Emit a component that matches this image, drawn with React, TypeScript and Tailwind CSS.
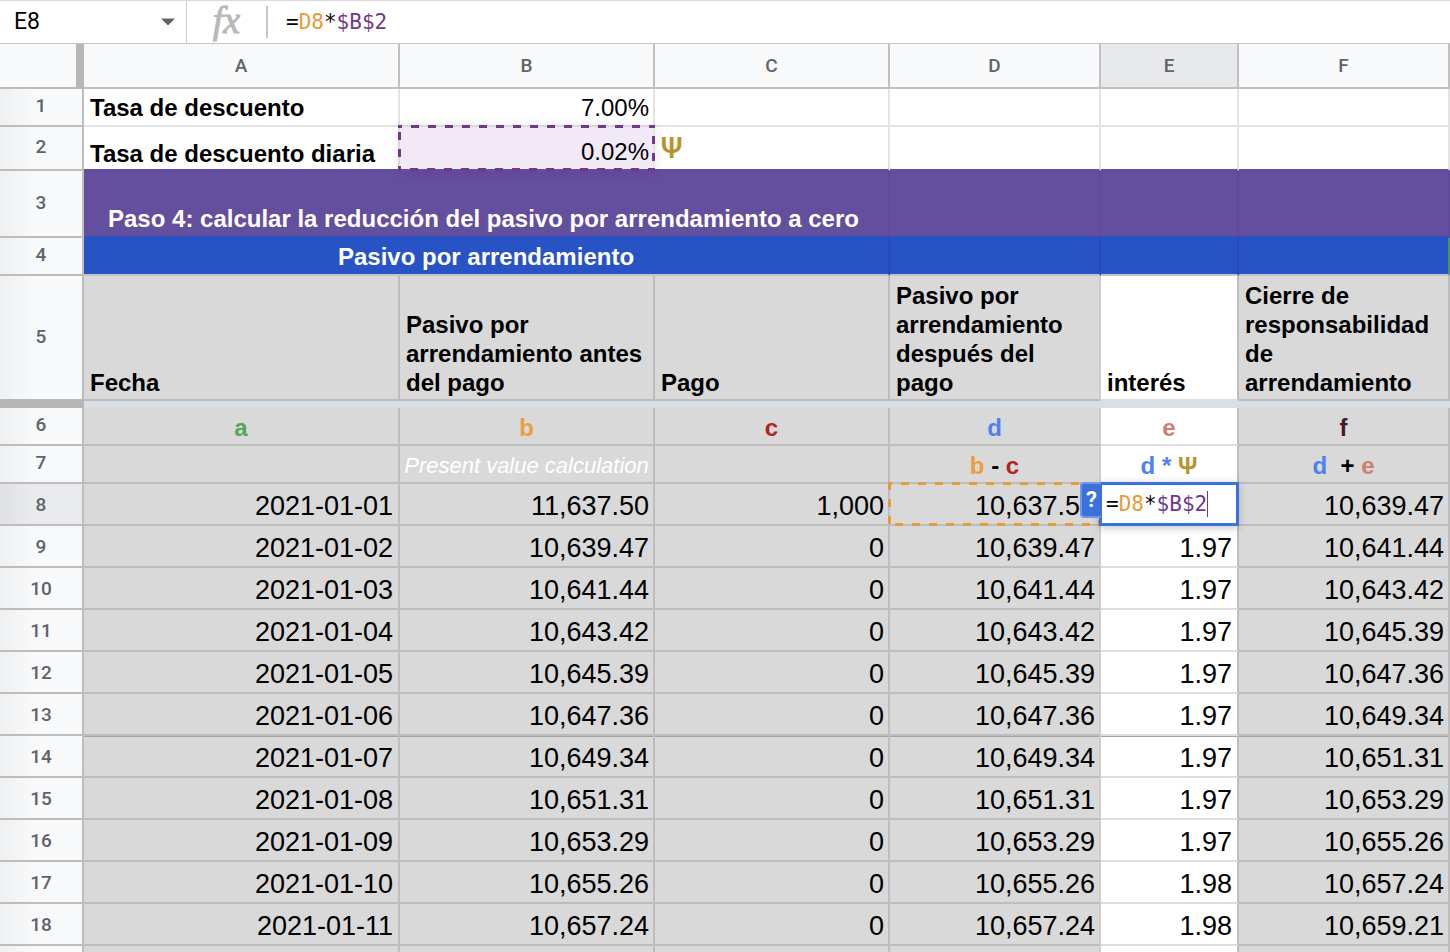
import React from "react";

const GRID = "border-[#bdbdbd]";
const LIGHT = "border-[#e2e3e3]";

const tones = {
  green: "text-[#56a558]",
  orange: "text-[#eb9f3c]",
  red: "text-[#b0241a]",
  blue: "text-[#4f81ee]",
  coral: "text-[#cc7f72]",
  plum: "text-[#46182f]",
  gold: "text-[#b8932e]",
};

function RowHead({ n, h, active = false, edge = GRID, pad = "pb-0.5" }: { n: string; h: string; active?: boolean; edge?: string; pad?: string }) {
  const fill = active
    ? "bg-linear-to-r from-[#dfe1e6] to-[#e8eaed] to-40%"
    : "bg-linear-to-r from-[#eff0f2] to-[#f8f9fb] to-40%";
  return (
    <th
      scope="row"
      className={`${h} ${fill} ${edge} ${pad} border-r-2 border-b-2 px-0 text-center align-middle font-[Roboto,sans-serif] text-[19px] leading-6 font-medium text-[#5f6368]`}
    >
      {n}
    </th>
  );
}

function Marquee({ color }: { color: string }) {
  return (
    <svg className="pointer-events-none absolute -top-0.5 -left-0.5 h-[calc(100%+4px)] w-[calc(100%+4px)] overflow-hidden" aria-hidden="true">
      <rect width="100%" height="100%" fill="none" stroke={color} strokeWidth="6" strokeDasharray="8 9" strokeDashoffset="4" />
    </svg>
  );
}

function Formula() {
  return (
    <>
      =<span className="text-[#e69a38]">D8</span>*<span className="text-[#6f3a8c]">$B$2</span>
    </>
  );
}

const BOLD = "px-1.5 align-bottom text-[24px] leading-[29px] font-bold";
const NUM = "pb-0.5 text-right align-bottom text-[27px] leading-8";
const PERCENT = "pr-1 pb-[3px] text-right align-bottom text-[24px] leading-[29px]";
const MID = "pb-0.5 text-center align-bottom text-[24px] leading-[29px] font-bold";
const GREY = "border-r-2 border-b-2 border-[#bdbdbd] bg-[#d9d9d9]";
const GREY_SOFT = "border-r-2 border-b-2 border-r-[#cdcdcd] border-b-[#bdbdbd] bg-[#d9d9d9]";
const WHITE = "border-r-2 border-b-2 border-r-[#bdbdbd] border-b-[#dcdcdc] bg-white";

const letters = [
  ["a", tones.green, GREY],
  ["b", tones.orange, GREY],
  ["c", tones.red, GREY],
  ["d", tones.blue, GREY_SOFT],
  ["e", tones.coral, WHITE],
  ["f", tones.plum, GREY],
];

const columnFill = [GREY, GREY, GREY, GREY_SOFT, WHITE, GREY];

const entries = [
  ["8", "2021-01-01", "11,637.50", "1,000", "10,637.50", "", "10,639.47"],
  ["9", "2021-01-02", "10,639.47", "0", "10,639.47", "1.97", "10,641.44"],
  ["10", "2021-01-03", "10,641.44", "0", "10,641.44", "1.97", "10,643.42"],
  ["11", "2021-01-04", "10,643.42", "0", "10,643.42", "1.97", "10,645.39"],
  ["12", "2021-01-05", "10,645.39", "0", "10,645.39", "1.97", "10,647.36"],
  ["13", "2021-01-06", "10,647.36", "0", "10,647.36", "1.97", "10,649.34"],
  ["14", "2021-01-07", "10,649.34", "0", "10,649.34", "1.97", "10,651.31"],
  ["15", "2021-01-08", "10,651.31", "0", "10,651.31", "1.97", "10,653.29"],
  ["16", "2021-01-09", "10,653.29", "0", "10,653.29", "1.97", "10,655.26"],
  ["17", "2021-01-10", "10,655.26", "0", "10,655.26", "1.98", "10,657.24"],
  ["18", "2021-01-11", "10,657.24", "0", "10,657.24", "1.98", "10,659.21"],
  ["", "", "", "", "", "", ""],
];

function Entry({ row }: { row: string[] }) {
  const [n, ...cells] = row;
  const first = n === "8";
  const top = n === "14" ? "shadow-[inset_0_1px_0_#a3a3a3]" : "";
  return (
    <tr>
      <RowHead n={n} h="h-[42px]" active={first} pad="pt-0.5" />
      {cells.map((value, i) => {
        if (first && i === 3)
          return (
            <td key={i} className={`relative ${GREY_SOFT} ${NUM} pr-1`}>
              {value}
              <Marquee color="#e69a38" />
            </td>
          );
        if (first && i === 4)
          return (
            <td key={i} className="relative bg-white p-0">
              <div className="absolute -top-0.5 right-0 bottom-0 -left-0.5 z-10 flex items-center border-[3px] border-[#3b71da] bg-white pl-1 shadow-[0_2px_8px_rgba(60,64,67,0.3)]">
                <div
                  role="textbox"
                  aria-label="Celda E8"
                  contentEditable
                  suppressContentEditableWarning
                  className="border-r border-[#6f3a8c] font-['DejaVu_Sans_Mono',monospace] text-[21px] leading-[26px] outline-none"
                >
                  <Formula />
                </div>
              </div>
              <button
                type="button"
                aria-label="Ayuda de fórmulas"
                className="absolute -top-0.5 right-full z-20 h-9 w-[21px] rounded-l-sm border-2 border-r-0 border-[#6f97e6] bg-[#3b71da] font-[Roboto,sans-serif] text-[22px] leading-6 font-bold text-white"
              >
                ?
              </button>
            </td>
          );
        return (
          <td key={i} className={`${columnFill[i]} ${NUM} ${i === 0 || i === 4 ? "pr-[5px]" : "pr-1"} ${top}`}>
            {value}
          </td>
        );
      })}
    </tr>
  );
}

export default function App() {
  return (
    <div className="flex h-screen flex-col overflow-hidden bg-white font-['Liberation_Sans',Arial,sans-serif] text-black">
      <header className="flex h-11 shrink-0 items-center border-t border-b border-t-[#dadada] border-b-[#c4c4c4]">
        <div className="flex h-full w-[187px] items-center justify-between border-r border-[#d0d0d0] pr-2.5 pl-3.5">
          <input aria-label="Cuadro de nombres" defaultValue="E8" className="w-24 bg-transparent font-[Roboto,sans-serif] text-[23px] leading-7 outline-none" />
          <button type="button" aria-label="Abrir lista de rangos" className="flex h-8 w-4 items-center justify-center">
            <svg width="14" height="8" viewBox="0 0 14 8" aria-hidden="true">
              <path d="M0 0.5h14L7 7.5z" fill="#5f6368" />
            </svg>
          </button>
        </div>
        <div className="flex h-8 w-[81px] items-center justify-center border-r-2 border-[#c6c6c6] pb-1 font-['Liberation_Serif',serif] text-[38px] leading-8 text-[#b9b9b9] italic [-webkit-text-stroke:1px_#b9b9b9]">
          fx
        </div>
        <div
          role="textbox"
          aria-label="Barra de fórmulas"
          contentEditable
          suppressContentEditableWarning
          className="flex-1 pl-[18px] font-['DejaVu_Sans_Mono',monospace] text-[21px] leading-7 outline-none"
        >
          <Formula />
        </div>
      </header>

      <main className="min-h-0 flex-1 overflow-hidden">
        <table className="w-full table-fixed border-separate border-spacing-0">
          <colgroup>
            <col className="w-[84px]" />
            <col className="w-[316px]" />
            <col className="w-[255px]" />
            <col className="w-[235px]" />
            <col className="w-[211px]" />
            <col className="w-[138px]" />
            <col className="w-[211px]" />
          </colgroup>
          <thead>
            <tr>
              <td className="h-[45px] border-r-8 border-b-2 border-r-[#b7b7b7] border-b-[#bdbdbd] bg-[#f8f9fb] p-0" />
              {["A", "B", "C", "D", "E", "F"].map((c) => (
                <th
                  key={c}
                  scope="col"
                  className={`border-r-2 border-b-2 border-[#c0c0c0] p-0 text-center font-[Roboto,sans-serif] text-[19px] leading-6 font-medium text-[#5f6368] ${c === "E" ? "bg-[#e8e9ed]" : "bg-[#f8f9fb]"}`}
                >
                  {c}
                </th>
              ))}
            </tr>
          </thead>
          <tbody>
            <tr>
              <RowHead n="1" h="h-[38px]" />
              <td className={`border-r-2 border-b-2 ${LIGHT} ${BOLD} pb-[3px]`}>Tasa de descuento</td>
              <td className={`border-r-2 border-b-2 ${LIGHT} ${PERCENT}`}>7.00%</td>
              {["C", "D", "E", "F"].map((c) => (
                <td key={c} className={`border-r-2 border-b-2 ${LIGHT}`} />
              ))}
            </tr>
            <tr>
              <RowHead n="2" h="h-[44px]" />
              <td className={`border-r-2 border-b-2 border-r-[#e2e3e3] border-b-[#644e9e] ${BOLD} pb-px`}>Tasa de descuento diaria</td>
              <td className={`relative border-r-2 border-b-2 border-r-[#e2e3e3] border-b-[#644e9e] bg-[#f1e9f5] shadow-[0_0_12px_rgba(0,0,0,0.1)] ${PERCENT}`}>
                0.02%
                <Marquee color="#6f3a8c" />
              </td>
              <td className={`border-r-2 border-b-2 border-r-[#e2e3e3] border-b-[#644e9e] px-1.5 font-[Roboto,sans-serif] text-[30px] leading-8 font-medium ${tones.gold}`}>Ψ</td>
              {["D", "E", "F"].map((c) => (
                <td key={c} className="border-r-2 border-b-2 border-r-[#e2e3e3] border-b-[#644e9e]" />
              ))}
            </tr>
            <tr>
              <RowHead n="3" h="h-[67px]" />
              <td colSpan={3} className="border-r-2 border-b-2 border-r-[#5e4a97] border-b-[#2753c5] bg-[#644e9e] px-6 pb-[3px] align-bottom text-[24px] leading-[29px] font-bold text-white">
                Paso 4: calcular la reducción del pasivo por arrendamiento a cero
              </td>
              {["D", "E", "F"].map((c) => (
                <td key={c} className="border-r-2 border-b-2 border-r-[#5e4a97] border-b-[#2753c5] bg-[#644e9e]" />
              ))}
            </tr>
            <tr>
              <RowHead n="4" h="h-[38px]" />
              <td colSpan={3} className="border-r-2 border-b-2 border-r-[#244db8] border-b-[#c4c4c8] bg-[#2753c5] pb-[3px] text-center align-bottom text-[24px] leading-[29px] font-bold text-white">
                Pasivo por arrendamiento
              </td>
              {["D", "E"].map((c) => (
                <td key={c} className="border-r-2 border-b-2 border-r-[#244db8] border-b-[#c4c4c8] bg-[#2753c5]" />
              ))}
              <td className="border-r-2 border-b-2 border-r-[#4a9460] border-b-[#c4c4c8] bg-[#2753c5]" />
            </tr>
            <tr>
              <RowHead n="5" h="h-[125px]" edge="border-r-[#bdbdbd] border-b-[#b7b7b7]" />
              <td className={`${GREY} ${BOLD} pb-0.5`}>Fecha</td>
              <td className={`${GREY} ${BOLD} pb-0.5`}>Pasivo por arrendamiento antes del pago</td>
              <td className={`${GREY} ${BOLD} pb-0.5`}>Pago</td>
              <td className={`${GREY_SOFT} ${BOLD} pb-0.5`}>Pasivo por arrendamiento después del pago</td>
              <td className={`${WHITE} ${BOLD} pb-0.5`}>interés</td>
              <td className={`${GREY} ${BOLD} pb-0.5`}>Cierre de responsabilidad de arrendamiento</td>
            </tr>
            <tr aria-hidden="true">
              <td className="h-[7px] bg-[#b7b7b7] p-0" />
              <td colSpan={6} className="bg-[#dadee8] p-0" />
            </tr>
            <tr>
              <RowHead n="6" h="h-[38px]" />
              {letters.map(([l, tone, fill]) => (
                <td key={l} className={`${fill} ${MID} ${tone}`}>
                  {l}
                </td>
              ))}
            </tr>
            <tr>
              <RowHead n="7" h="h-[38px]" />
              <td className={GREY} />
              <td className={`${GREY} pb-0.5 text-center align-bottom text-[22px] leading-[29px] whitespace-nowrap text-white italic`}>Present value calculation</td>
              <td className={GREY} />
              <td className={`${GREY_SOFT} ${MID}`}>
                <span className={tones.orange}>b</span> - <span className={tones.red}>c</span>
              </td>
              <td className={`${WHITE} ${MID}`}>
                <span className={tones.blue}>d *</span> <span className={tones.gold}>Ψ</span>
              </td>
              <td className={`${GREY} ${MID}`}>
                <span className={tones.blue}>d</span>
                {"\u00a0 "}+ <span className={tones.coral}>e</span>
              </td>
            </tr>
            {entries.map((row, i) => (
              <Entry key={i} row={row} />
            ))}
          </tbody>
        </table>
      </main>
    </div>
  );
}
